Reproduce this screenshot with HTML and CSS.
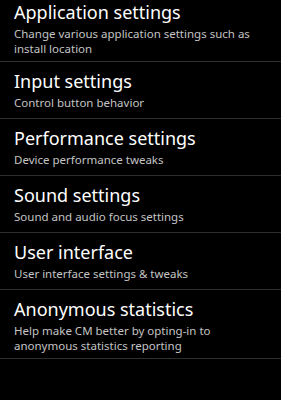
FILE: index.html
```html
<!DOCTYPE html>
<html lang="en">
<head>
  <meta charset="UTF-8">
  <title>CyanogenMod settings</title>
  <link rel="stylesheet" href="styles.css">
</head>
<body>
  <ul class="prefs">
    <li class="pref">
      <span class="title">Application settings</span>
      <span class="summary">Change various application settings such as install location</span>
    </li>
    <li class="pref">
      <span class="title">Input settings</span>
      <span class="summary">Control button behavior</span>
    </li>
    <li class="pref">
      <span class="title">Performance settings</span>
      <span class="summary">Device performance tweaks</span>
    </li>
    <li class="pref">
      <span class="title">Sound settings</span>
      <span class="summary">Sound and audio focus settings</span>
    </li>
    <li class="pref">
      <span class="title">User interface</span>
      <span class="summary">User interface settings &amp; tweaks</span>
    </li>
    <li class="pref">
      <span class="title">Anonymous statistics</span>
      <span class="summary">Help make CM better by opting-in to anonymous statistics reporting</span>
    </li>
  </ul>
</body>
</html>
```

FILE: styles.css
```css
/* Reset */
* {
  box-sizing: border-box;
  margin: 0;
  padding: 0;
}

body {
  background-color: #000;
  font-family: "Noto Sans", "Open Sans", sans-serif;
  height: 400px;
  overflow: hidden;
}

/* Preference list */
.prefs {
  list-style: none;
  margin-top: -7px;
}

.pref {
  display: flex;
  flex-direction: column;
  min-height: 57px;
  padding: 7px 14px 5px 14px;
  border-bottom: 1px solid #2e2e2e;
}

.title {
  color: #fff;
  font-size: 18px;
  line-height: 24px;
}

.summary {
  color: #c4c4c4;
  font-size: 11.5px;
  line-height: 15px;
  margin-top: 2px;
  padding-right: 12px;
}
```
